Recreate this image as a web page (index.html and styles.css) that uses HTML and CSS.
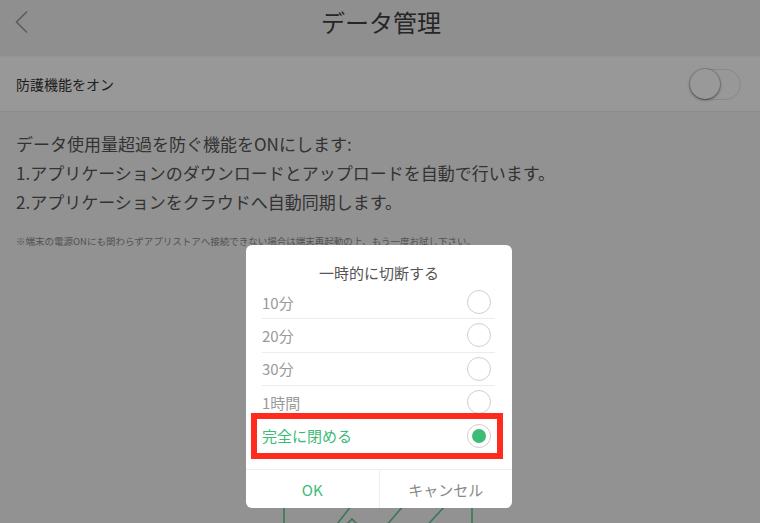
FILE: index.html
```html
<!DOCTYPE html>
<html lang="ja">
<head>
<meta charset="utf-8">
<title>データ管理</title>
<link rel="stylesheet" href="styles.css">
</head>
<body>
<div class="page">
  <header class="header">
    <svg class="back" width="16" height="24" viewBox="0 0 16 24"><path d="M12 1.5 L1.5 12 L12 22.5" fill="none" stroke="#9a9a9a" stroke-width="1.6"/></svg>
    <h1 class="title">データ管理</h1>
  </header>
  <div class="setting">
    <span class="setting-label">防護機能をオン</span>
    <span class="switch"><span class="knob"></span></span>
  </div>
  <main class="content">
    <p class="desc">データ使用量超過を防ぐ機能をONにします:<br>1.アプリケーションのダウンロードとアップロードを自動で行います。<br>2.アプリケーションをクラウドへ自動同期します。</p>
    <p class="note">※端末の電源ONにも関わらずアプリストアへ接続できない場合は端末再起動の上、もう一度お試し下さい。</p>
    <svg class="art" width="230" height="40" viewBox="0 0 230 40">
      <g fill="none" stroke="#5fc792" stroke-width="1.6">
        <path d="M24 0 V40"/>
        <path d="M212 0 V40"/>
        <path d="M92 2 L70 30"/>
        <path d="M78 30 L92 16 L106 30"/>
        <path d="M144 2 L120 30"/>
        <path d="M186 2 L160 30"/>
      </g>
    </svg>
  </main>
</div>
<div class="overlay">
  <div class="dialog">
    <div class="dialog-title">一時的に切断する</div>
    <ul class="options">
      <li class="option"><span>10分</span><span class="radio"></span></li>
      <li class="option"><span>20分</span><span class="radio"></span></li>
      <li class="option"><span>30分</span><span class="radio"></span></li>
      <li class="option"><span>1時間</span><span class="radio"></span></li>
      <li class="option selected"><span>完全に閉める</span><span class="radio"><span class="dot"></span></span></li>
    </ul>
    <div class="buttons">
      <button class="btn ok">OK</button>
      <button class="btn cancel">キャンセル</button>
    </div>
    <div class="highlight"></div>
  </div>
</div>
</body>
</html>
```
FILE: styles.css
```css
* { box-sizing: border-box; }
html, body {
  margin: 0;
  padding: 0;
  width: 760px;
  height: 523px;
  overflow: hidden;
}
body {
  font-family: "Noto Sans CJK JP", "Noto Sans", sans-serif;
  background: #f4f4f4;
}
.page {
  width: 760px;
  height: 523px;
  display: flex;
  flex-direction: column;
  overflow: hidden;
}
.header {
  flex-shrink: 0;
  height: 57px;
  background: #eeeeee;
  border-bottom: 1px solid #f8f8f8;
  display: flex;
  align-items: flex-start;
  padding: 0 0 0 15px;
  position: relative;
}
.back {
  margin-top: 10px;
}
.title {
  margin: 0;
  position: absolute;
  left: 0;
  right: 0;
  top: 0;
  text-align: center;
  font-size: 24px;
  line-height: 44px;
  font-weight: 400;
  color: #404040;
  padding-left: 2px;
}
.setting {
  flex-shrink: 0;
  height: 55px;
  background: #fdfdfd;
  border-bottom: 1px solid #e8e8e8;
  display: flex;
  align-items: center;
  justify-content: space-between;
  padding: 0 19px 0 16px;
}
.setting-label {
  font-size: 14px;
  color: #333;
}
.switch {
  width: 51px;
  height: 31px;
  border-radius: 16px;
  border: 1.5px solid #e4e4e4;
  background: #fdfdfd;
  position: relative;
  display: block;
}
.knob {
  position: absolute;
  left: -1px;
  top: -1px;
  width: 30px;
  height: 30px;
  border-radius: 50%;
  background: #fff;
  box-shadow: 0 1px 3px rgba(0,0,0,0.45), 0 0 0 1px rgba(0,0,0,0.12);
}
.content {
  flex-shrink: 0;
  padding: 17px 16px 0 16px;
  display: flex;
  flex-direction: column;
}
.desc {
  margin: 0;
  font-size: 17px;
  line-height: 29px;
  color: #555;
}
.note {
  margin: 19px 0 0 0;
  font-size: 9.5px;
  line-height: 12px;
  color: #8a8a8a;
  white-space: nowrap;
}
.art {
  flex-shrink: 0;
  margin: 256px 0 0 244px;
  display: block;
}
.overlay {
  position: fixed;
  inset: 0;
  background: rgba(0,0,0,0.4);
  padding: 245px 0 0 246px;
}
.dialog {
  position: relative;
  width: 266px;
  height: 263px;
  background: #fff;
  border-radius: 6px;
  display: flex;
  flex-direction: column;
}
.dialog-title {
  padding-top: 18px;
  height: 41px;
  text-align: center;
  font-size: 15px;
  line-height: 20px;
  color: #555;
}
.options {
  list-style: none;
  margin: 0 17px 0 16px;
  padding: 0;
}
.option {
  height: 33.3px;
  border-bottom: 1px solid #ececec;
  display: flex;
  align-items: center;
  justify-content: space-between;
  padding: 0 4px 0 0;
  font-size: 15px;
  color: #9a9a9a;
}
.option:last-child {
  border-bottom: none;
}
.option.selected {
  color: #3dbb78;
}
.radio {
  width: 24px;
  height: 24px;
  border-radius: 50%;
  border: 1px solid #cfcfcf;
  display: flex;
  align-items: center;
  justify-content: center;
}
.dot {
  width: 14px;
  height: 14px;
  border-radius: 50%;
  background: #3dbb78;
}
.buttons {
  margin-top: auto;
  height: 39px;
  border-top: 1px solid #eeeeee;
  display: flex;
}
.btn {
  flex: 1;
  border: none;
  background: transparent;
  font-family: inherit;
  font-size: 15px;
  padding: 0;
  margin: 0;
}
.ok {
  color: #3dbb78;
  border-right: 1px solid #eeeeee;
}
.cancel {
  color: #8a8a8a;
}
.highlight {
  position: absolute;
  left: 5px;
  top: 168px;
  width: 252px;
  height: 46px;
  border: 6px solid #fe2b1e;
}
```
